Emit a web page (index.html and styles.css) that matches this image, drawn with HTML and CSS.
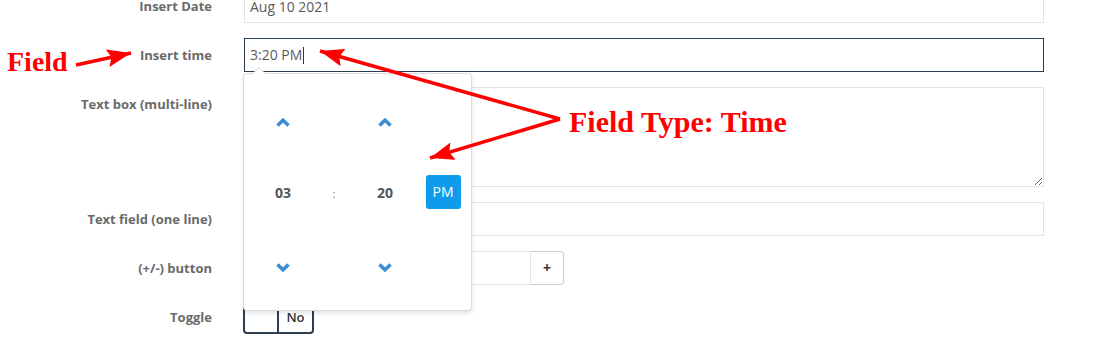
FILE: index.html
```html
<html>
<head>
<title>Form fields</title>
<meta http-equiv="Content-Type" content="text/html; charset=utf-8"/>
<link rel="stylesheet" href="styles.css">
</head>
<body>
<div class="form">
  <div class="row">
    <div class="lbl">Insert Date</div>
    <div class="field"><input class="input" type="text" value="Aug 10 2021"></div>
  </div>
  <div class="row">
    <div class="lbl">Insert time</div>
    <div class="field pick">
      <div class="input focus">3:20 PM<span class="caret"></span></div>
      <div class="timepicker">
        <div class="tp-grid">
          <div class="tp-cell arrow"><svg width="14" height="9" viewBox="0 0 14 9"><polyline points="1.5,7.5 7,2.2 12.5,7.5" /></svg></div>
          <div class="tp-cell"></div>
          <div class="tp-cell arrow"><svg width="14" height="9" viewBox="0 0 14 9"><polyline points="1.5,7.5 7,2.2 12.5,7.5" /></svg></div>
          <div class="tp-cell"></div>

          <div class="tp-cell val">03</div>
          <div class="tp-cell sep">:</div>
          <div class="tp-cell val">20</div>
          <div class="tp-cell"><span class="ampm">PM</span></div>

          <div class="tp-cell arrow"><svg width="14" height="9" viewBox="0 0 14 9"><polyline points="1.5,1.5 7,6.8 12.5,1.5" /></svg></div>
          <div class="tp-cell"></div>
          <div class="tp-cell arrow"><svg width="14" height="9" viewBox="0 0 14 9"><polyline points="1.5,1.5 7,6.8 12.5,1.5" /></svg></div>
          <div class="tp-cell"></div>
        </div>
      </div>
    </div>
  </div>
  <div class="row">
    <div class="lbl">Text box (multi-line)</div>
    <div class="field"><textarea class="input area"></textarea></div>
  </div>
  <div class="row">
    <div class="lbl">Text field (one line)</div>
    <div class="field"><input class="input" type="text"></div>
  </div>
  <div class="row">
    <div class="lbl">(+/-) button</div>
    <div class="field group">
      <input class="input short" type="text">
      <span class="plus">+</span>
    </div>
  </div>
  <div class="row">
    <div class="lbl">Toggle</div>
    <div class="field">
      <div class="toggle"><span class="tg-on"></span><span class="tg-off">No</span></div>
    </div>
  </div>
</div>

<svg class="notes" width="1100" height="343">
  <defs>
    <marker id="head" markerUnits="userSpaceOnUse" markerWidth="26" markerHeight="18" refX="24" refY="9" orient="auto">
      <path d="M0,0 L24,9 L0,18 L4,9 z" fill="#ff0000"/>
    </marker>
  </defs>
  <line x1="76" y1="65" x2="131" y2="53" stroke="#ff0000" stroke-width="3.5" marker-end="url(#head)"/>
  <line x1="560" y1="119" x2="320" y2="51" stroke="#ff0000" stroke-width="3.5" marker-end="url(#head)"/>
  <line x1="560" y1="119" x2="430" y2="158" stroke="#ff0000" stroke-width="3.5" marker-end="url(#head)"/>
  <text x="7" y="71" class="note small">Field</text>
  <text x="569" y="132" class="note">Field Type: Time</text>
</svg>
</body>
</html>
```

FILE: styles.css
```css
body {
    margin:0;
    background:#fff;
    font-family:"Open Sans", "Liberation Sans", sans-serif;
    overflow:hidden;
}
.form {
    margin-top:-11px;
}
.row {
    display:flex;
    align-items:flex-start;
    margin-bottom:15px;
}
.lbl {
    width:212px;
    text-align:right;
    padding-top:8px;
    line-height:18px;
    font-size:13px;
    font-weight:700;
    color:#6a6a6a;
}
.field {
    margin-left:32px;
    width:800px;
}
.input {
    display:block;
    box-sizing:border-box;
    width:800px;
    height:34px;
    margin:0;
    padding:0 5px;
    border:solid 1px #e4e4e4;
    border-radius:0;
    background:#fff;
    font-family:"Open Sans", "Liberation Sans", sans-serif;
    font-size:14px;
    line-height:32px;
    color:#5a5a5a;
    outline:none;
}
.focus {
    border-color:#2c3e50;
}
.caret {
    display:inline-block;
    width:1px;
    height:17px;
    margin-left:1px;
    background:#333;
    vertical-align:middle;
    position:relative;
    top:-1px;
}
.area {
    height:100px;
    resize:vertical;
}
.pick {
    position:relative;
}
.timepicker {
    position:absolute;
    left:-1px;
    top:35px;
    width:229px;
    height:238px;
    box-sizing:border-box;
    background:#fff;
    border:solid 1px #dcdcdc;
    border-radius:4px;
    box-shadow:0 2px 4px rgba(0,0,0,0.12);
    z-index:10;
}
.timepicker:before {
    content:"";
    position:absolute;
    left:8px;
    top:-7px;
    border-left:7px solid transparent;
    border-right:7px solid transparent;
    border-bottom:7px solid #dcdcdc;
}
.timepicker:after {
    content:"";
    position:absolute;
    left:9px;
    top:-6px;
    border-left:6px solid transparent;
    border-right:6px solid transparent;
    border-bottom:6px solid #fff;
}
.tp-grid {
    display:grid;
    grid-template-columns:54px 48px 54px 62px;
    grid-template-rows:72px 68px 82px;
    padding:12px 0 0 12px;
}
.tp-cell {
    display:flex;
    align-items:center;
    justify-content:center;
}
.arrow svg polyline {
    fill:none;
    stroke:#3f8cd2;
    stroke-width:3.6;
}
.val {
    font-size:14px;
    font-weight:700;
    color:#555;
}
.sep {
    font-size:11px;
    color:#8a7650;
    padding-top:3px;
}
.ampm {
    display:block;
    width:35px;
    height:34px;
    line-height:34px;
    text-align:center;
    background:#0e9beb;
    color:#fff;
    font-size:14px;
    border-radius:3px;
}
.group {
    display:flex;
}
.short {
    width:287px;
}
.plus {
    display:block;
    box-sizing:border-box;
    width:33px;
    height:34px;
    line-height:32px;
    text-align:center;
    border:solid 1px #cccccc;
    border-left:none;
    border-radius:0 4px 4px 0;
    font-size:14px;
    font-weight:700;
    color:#333;
}
.toggle {
    display:flex;
    box-sizing:border-box;
    margin-left:-1px;
    width:71px;
    height:34px;
    border:solid 2px #2c3e50;
    border-radius:4px;
}
.tg-on {
    width:32px;
    border-right:solid 2px #2c3e50;
}
.tg-off {
    flex:1;
    text-align:center;
    line-height:30px;
    font-size:13px;
    font-weight:600;
    color:#333;
}
.notes {
    position:absolute;
    left:0;
    top:0;
    z-index:20;
    pointer-events:none;
}
.note {
    font-family:"Liberation Serif", "Times New Roman", serif;
    font-weight:700;
    font-size:30px;
    fill:#ff0000;
}
.small {
    font-size:28px;
}
```
